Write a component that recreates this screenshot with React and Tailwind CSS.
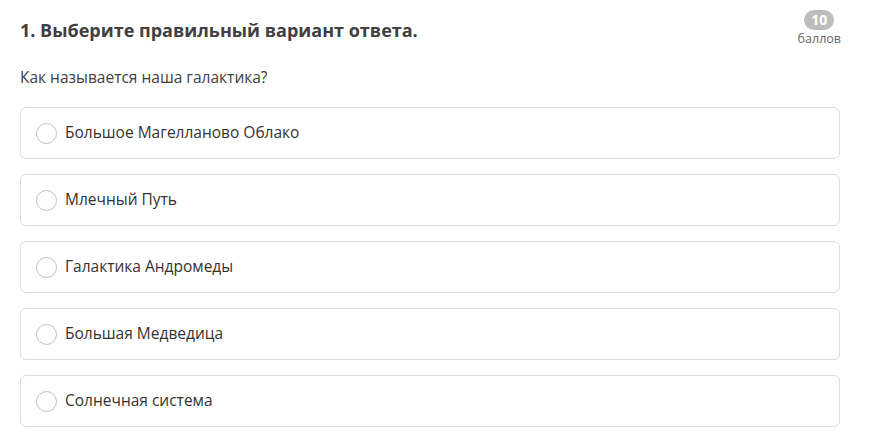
import React, { useState } from 'react';

const options = [
  'Большое Магелланово Облако',
  'Млечный Путь',
  'Галактика Андромеды',
  'Большая Медведица',
  'Солнечная система',
];

const App = () => {
  const [selected, setSelected] = useState(null);

  return (
    <div className="w-[876px] h-[441px] bg-white font-['Open_Sans',sans-serif] text-[#333]">
      <div className="pl-5 pr-[36px] pt-[17px]">
        <div className="flex items-start justify-between">
          <h1 className="text-[18px] leading-[24px] font-bold text-[#404040] pt-[1px]">
            1. Выберите правильный вариант ответа.
          </h1>
          <div className="flex flex-col items-center -mt-[7px] mr-[-1px]">
            <span className="px-[6px] h-[20px] min-w-[30px] rounded-full bg-[#bdbdbd] text-white text-[14px] font-bold leading-[20px] text-center">
              10
            </span>
            <span className="text-[12.5px] leading-[15px] text-[#666] mt-[1px]">баллов</span>
          </div>
        </div>

        <p className="mt-[21px] text-[15.5px] leading-[20px] text-[#404040]">Как называется наша галактика?</p>

        {/* -- options */}
        <div className="mt-[20px] flex flex-col gap-[15px]">
          {options.map((opt, i) => (
            <label
              key={opt}
              onClick={() => setSelected(i)}
              className="h-[52px] flex items-center gap-2 px-[15px] border border-[#dcdcdc] rounded-[6px] cursor-pointer"
            >
              <span className="w-[21px] h-[21px] rounded-full border border-[#bfbfbf] flex items-center justify-center">
                {selected === i ? <span className="w-[11px] h-[11px] rounded-full bg-[#4a90e2]" /> : null}
              </span>
              <span className="text-[15.5px] text-[#333]">{opt}</span>
            </label>
          ))}
        </div>
      </div>
    </div>
  );
};

export default App;
